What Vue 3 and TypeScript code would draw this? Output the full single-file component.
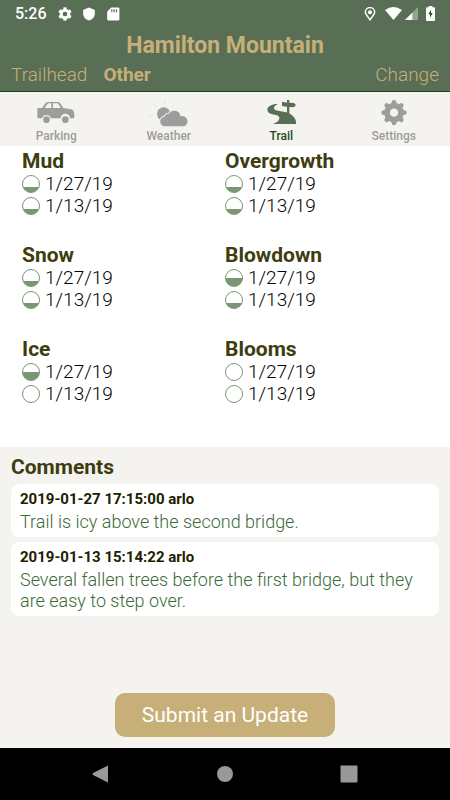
<script setup lang="ts">
import { ref } from 'vue'

type Level = 'none' | 'low' | 'half'
interface Reading { date: string; level: Level }
interface Condition { name: string; readings: Reading[] }
interface Comment { id: number; heading: string; text: string }

const smallTeeth = [0, 60, 120, 180, 240, 300]
const teeth = [0, 45, 90, 135, 180, 225, 270, 315]
const tabs = ['Parking', 'Weather', 'Trail', 'Settings']
const activeTab = ref('Trail')
const views = ['Trailhead', 'Other']
const activeView = ref('Other')

function pair(name: string, latest: Level, previous: Level): Condition {
  return {
    name,
    readings: [
      { date: '1/27/19', level: latest },
      { date: '1/13/19', level: previous },
    ],
  }
}

const conditions: Condition[] = [
  pair('Mud', 'low', 'low'),
  pair('Overgrowth', 'low', 'low'),
  pair('Snow', 'low', 'low'),
  pair('Blowdown', 'half', 'low'),
  pair('Ice', 'half', 'none'),
  pair('Blooms', 'none', 'none'),
]

const comments: Comment[] = [
  { id: 1, heading: '2019-01-27 17:15:00 arlo', text: 'Trail is icy above the second bridge.' },
  { id: 2, heading: '2019-01-13 15:14:22 arlo', text: 'Several fallen trees before the first bridge, but they are easy to step over.' },
]
</script>

<template>
  <div class="screen">
    <header class="header">
      <div class="status">
        <div class="status-group">
          <span class="clock">5:26</span>
          <svg class="status-icon" viewBox="0 0 80 80" fill="none" stroke="#fff" aria-hidden="true">
            <circle cx="40" cy="40" r="22" stroke-width="17" />
            <path v-for="a in smallTeeth" :key="a" d="M40 2V14" stroke-width="19" :transform="`rotate(${a} 40 40)`" />
          </svg>
          <svg class="status-icon" viewBox="0 0 24 24" fill="#fff" aria-hidden="true">
            <path d="M12 1 2 5v6c0 5.500 4 10.700 10 12 6-1.300 10-6.500 10-12V5z" />
          </svg>
          <svg class="status-icon" viewBox="0 0 24 24" aria-hidden="true">
            <path fill="#fff" d="M9 1h12q2 0 2 2v18q0 2-2 2H4q-2 0-2-2V8z" />
            <path stroke="#586e55" stroke-width="2" d="M10 4v5M14 4v5M18 4v5" />
          </svg>
        </div>
        <div class="status-group right">
          <svg class="status-icon pin" viewBox="0 0 24 24" aria-hidden="true">
            <path fill="none" stroke="#fff" stroke-width="2.500" d="M12 22C8 16 4 12 4 9a8 8 0 0 1 16 0c0 3-4 7-8 13z" />
            <circle cx="12" cy="9" r="3.500" fill="#fff" />
          </svg>
          <svg class="wifi" viewBox="0 0 51 39" fill="#fff" aria-hidden="true"><path d="M0 9Q25-9 51 9L25.500 39z" /></svg>
          <svg class="signal" viewBox="0 0 39 39" aria-hidden="true"><path fill="#95a391" d="M39 0v39H0z" /><path fill="#fff" d="M22 17v22H0z" /></svg>
          <svg class="battery" viewBox="0 0 27 45" aria-hidden="true">
            <path fill="#fff" d="M8 0h11v4h5q3 0 3 3v35q0 3-3 3H3q-3 0-3-3V7q0-3 3-3h5z" />
            <path fill="#1f4a1c" d="M15 12 7 25h5v10l8-14h-5z" />
          </svg>
        </div>
      </div>
      <h1 class="title">Hamilton Mountain</h1>
      <div class="views">
        <button v-for="view in views" :key="view" type="button" class="view" :class="{ chosen: view === activeView }" @click="activeView = view">{{ view }}</button>
        <button type="button" class="view change">Change</button>
      </div>
    </header>

    <nav class="tabs">
      <button v-for="tab in tabs" :key="tab" type="button" class="tab" :class="{ active: tab === activeTab }" @click="activeTab = tab">
        <svg v-if="tab === 'Parking'" class="tab-icon" viewBox="0 0 126 78" aria-hidden="true">
          <path fill="currentColor" fill-rule="evenodd" d="M7 28q0-4 4-4h10L32 9q2-3 6-3h31q4 0 6 3l10 15 19 3q14 2 14 15v9q0 4-4 4h-9a14 14 0 0 0-28 0H48a14 14 0 0 0-27 0H11q-4 0-4-4zM38 11 29 24h20V10h-9q-1 0-2 1zM54 10v14h23L70 11q-1-1-2-1z" />
          <circle cx="34.500" cy="59" r="10" fill="currentColor" />
          <circle cx="91" cy="59" r="10" fill="currentColor" />
        </svg>
        <svg v-else-if="tab === 'Weather'" class="tab-icon" viewBox="0 0 126 78" aria-hidden="true">
          <path stroke="#d8d8d5" stroke-width="2" d="M50 0v13M17 14l10 9M79 13l-9 9M4 47l13-3" />
          <circle cx="47" cy="42" r="20" fill="currentColor" />
          <path d="M52 79a14 14 0 0 1-2-29 11 11 0 0 1 13-8 18 18 0 0 1 34 7 15 15 0 1 1 11 30z" fill="currentColor" stroke="#f4f3ef" stroke-width="6" paint-order="stroke" />
        </svg>
        <svg v-else-if="tab === 'Trail'" class="tab-icon" viewBox="0 0 126 78" fill="currentColor" aria-hidden="true">
          <path d="M54 12C37 11 22 19 22 29c0 9 10 13 22 15 10 1 15 5 14 12-1 6-9 13-20 16h70c2-14-8-27-25-34-14-5-32-5-38-9-7-6 0-13 9-17z" />
          <path d="M81 0h7v8l14 1 6 6-7 7-13-1v23l-7-4V20l-15-2V5l15 3z" />
        </svg>
        <svg v-else class="tab-icon" viewBox="0 0 126 78" fill="none" stroke="currentColor" aria-hidden="true">
          <circle cx="63" cy="38" r="21" stroke-width="17" />
          <path v-for="a in teeth" :key="a" d="M63 7V14" stroke-width="14" stroke-linecap="round" :transform="`rotate(${a} 63 38)`" />
        </svg>
        <span>{{ tab }}</span>
      </button>
    </nav>

    <main class="main">
      <section class="conditions" aria-label="Trail conditions">
        <article v-for="item in conditions" :key="item.name">
          <h2 class="heading">{{ item.name }}</h2>
          <ul class="readings">
            <li v-for="reading in item.readings" :key="reading.date" class="reading">
              <span class="gauge" :class="reading.level"></span>{{ reading.date }}
            </li>
          </ul>
        </article>
      </section>

      <section class="comments">
        <h2 class="heading">Comments</h2>
        <article v-for="comment in comments" :key="comment.id" class="comment">
          <h3 class="comment-head">{{ comment.heading }}</h3>
          <p class="comment-text">{{ comment.text }}</p>
        </article>
        <button type="button" class="submit">Submit an Update</button>
      </section>
    </main>

    <footer class="system">
      <button type="button" class="key" aria-label="Back"><svg viewBox="0 0 18 18"><path d="M16 1v16q0 1-1 0L1 10q-1-1 0-2L15 1q1-1 1 0z" /></svg></button>
      <button type="button" class="key" aria-label="Home"><svg viewBox="0 0 18 18"><circle cx="9" cy="9" r="8" /></svg></button>
      <button type="button" class="key" aria-label="Recent apps"><svg viewBox="0 0 18 18"><rect x="0.500" y="0.500" width="17" height="17" rx="1" /></svg></button>
    </footer>
  </div>
</template>

<style>
body {
  margin: 0;
}
</style>

<style scoped>
.screen {
  display: flex;
  flex-direction: column;
  min-height: 100vh;
  font-family: Roboto, sans-serif;
  background: #fff;
}
button {
  margin: 0;
  padding: 0;
  border: 0;
  background: none;
  font: inherit;
  color: inherit;
  cursor: pointer;
}
h1, h2, h3, p, ul {
  margin: 0;
  padding: 0;
}
svg {
  display: block;
}
.header {
  background: #586e55;
  border-bottom: 1px solid #1f4a1c;
  color: #c7b078;
}
.status {
  display: flex;
  justify-content: space-between;
  align-items: center;
  height: 27px;
  padding: 0 15px;
  color: #fff;
}
.status-group {
  display: flex;
  align-items: center;
  gap: 10px;
}
.status-group.right {
  gap: 3px;
}
.clock {
  font-size: 16px;
  font-weight: 500;
  margin-right: 1px;
}
.status-icon {
  width: 14px;
  height: 14px;
}
.pin {
  margin-right: 5px;
}
.wifi {
  width: 17px;
  height: 13px;
}
.signal {
  width: 13px;
  height: 13px;
}
.battery {
  width: 9px;
  height: 15px;
  margin-left: 5px;
}
.title {
  font-size: 23px;
  line-height: 38px;
  font-weight: 700;
  text-align: center;
}
.views {
  display: flex;
  gap: 16px;
  padding: 0 11px 6px;
  font-size: 19px;
  line-height: 20px;
}
.view {
  font-weight: 300;
}
.view.chosen {
  font-weight: 700;
}
.change {
  margin-left: auto;
}
.tabs {
  display: grid;
  grid-template-columns: repeat(4, 1fr);
  background: #f4f3ef;
}
.tab {
  display: flex;
  flex-direction: column;
  align-items: center;
  padding: 8px 0 2px;
  font-size: 12px;
  line-height: 16px;
  font-weight: 500;
  gap: 2px;
  color: #9d9d9d;
}
.tab.active {
  color: #586e55;
}
.tab.active span {
  color: #1f4a1c;
}
.tab-icon {
  width: 42px;
  height: 26px;
  overflow: visible;
}
.main {
  flex: 1;
  display: flex;
  flex-direction: column;
}
.conditions {
  display: grid;
  grid-template-columns: 1fr 1fr;
  row-gap: 26px;
  padding: 3px 22px 42px;
}
.heading {
  font-size: 21px;
  line-height: 24px;
  font-weight: 700;
  color: #3d3d10;
}
.readings {
  list-style: none;
}
.reading {
  display: flex;
  align-items: center;
  gap: 5px;
  font-size: 19px;
  line-height: 22px;
  font-weight: 300;
  color: #000;
}
.gauge {
  box-sizing: border-box;
  width: 18px;
  height: 18px;
  border: 1px solid #7a9674;
  border-radius: 50%;
}
.gauge.low {
  background: linear-gradient(to top, #7a9674 30%, transparent 30%);
}
.gauge.half {
  background: linear-gradient(to top, #7a9674 52%, transparent 52%);
}
.comments {
  flex: 1;
  display: flex;
  flex-direction: column;
  gap: 5px;
  padding: 8px 11px 11px;
  background: #f4f3ef;
}
.comment {
  padding: 5px 9px;
  background: #fff;
  border-radius: 8px;
}
.comment-head {
  font-size: 15px;
  line-height: 20px;
  font-weight: 700;
  color: #202000;
}
.comment-text {
  font-size: 18px;
  line-height: 21px;
  padding-top: 2px;
  font-weight: 300;
  color: #3c6a37;
}
.submit {
  align-self: center;
  margin-top: auto;
  padding: 10px 27px;
  border-radius: 10px;
  background: #c7b078;
  color: #fff;
  font-size: 21px;
  line-height: 24px;
}
.system {
  display: flex;
  justify-content: center;
  gap: 106px;
  padding: 17px 0;
  background: #000;
}
.key svg {
  width: 18px;
  height: 18px;
  fill: #999;
}
</style>
